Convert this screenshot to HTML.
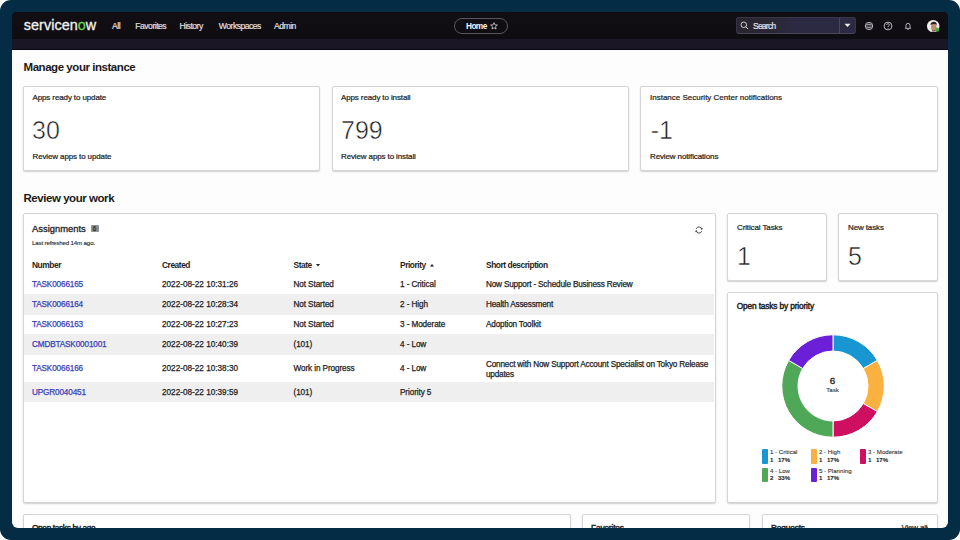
<!DOCTYPE html>
<html><head><meta charset="utf-8">
<style>
*{margin:0;padding:0;box-sizing:border-box;}
html,body{width:960px;height:540px;overflow:hidden;background:#fff;}
body{font-family:"Liberation Sans",sans-serif;color:#1e1e1e;position:relative;}
.frame{position:absolute;left:0;top:0;width:960px;height:540px;background:#042c45;border-radius:11px;}
.screen{position:absolute;left:0;top:0;width:960px;height:540px;clip-path:inset(12px 12px 12px 12px round 4px 4px 6px 6px);}
.bgc{position:absolute;left:0;top:40px;width:960px;height:500px;background:#fefdfd;}
.a{position:absolute;white-space:nowrap;}
.nav{position:absolute;left:0;top:0;width:960px;height:39.4px;background:linear-gradient(#120f15 0,#110e13 60%,#0d0c10 100%);}
.sub{position:absolute;left:0;top:39.4px;width:960px;height:9.4px;background:#1a1626;}
.subl{position:absolute;left:0;top:48.8px;width:960px;height:1px;background:#07050f;}
.navi{color:#e6e4ea;font-size:8.6px;top:21px;line-height:10px;letter-spacing:-0.5px;-webkit-text-stroke:0.15px #e6e4ea;}
.card{position:absolute;background:#fff;border:1px solid #d6d4d4;border-radius:2px;box-shadow:0 1px 1.5px rgba(0,0,0,0.18);}
.h{font-weight:bold;font-size:11.5px;letter-spacing:-0.45px;color:#1a1a1a;}
.t8{font-size:8px;line-height:10px;-webkit-text-stroke:0.22px currentColor;letter-spacing:-0.12px;}
.big{font-size:25px;line-height:28px;color:#1e1e1e;-webkit-text-stroke:0.5px #fff;}
.med{-webkit-text-stroke:0.45px #1e1e1e;letter-spacing:-0.15px;font-size:8.3px;}
.th{font-weight:bold;font-size:8.4px;line-height:10px;letter-spacing:-0.45px;}
.td{font-size:8.2px;line-height:10px;-webkit-text-stroke:0.25px currentColor;letter-spacing:-0.1px;}
.lnk{color:#3940b6;letter-spacing:-0.15px;}
.stripe{position:absolute;left:24px;width:690px;background:#efefef;}
</style></head><body>
<div class="frame"></div>
<div class="screen">
  <div class="bgc"></div>
  <div class="nav"></div>
  <div class="sub"></div>
  <div class="subl"></div>
  <!-- logo -->
  <div class="a" style="left:23.8px;top:16.2px;font-size:14.4px;line-height:18px;color:#f2f2f2;-webkit-text-stroke:0.3px #f2f2f2;letter-spacing:0.05px;">servicen<span style="color:#5fd64b;-webkit-text-stroke:0.3px #5fd64b">o</span>w</div>
  <div class="a navi" style="left:112px;">All</div>
  <div class="a navi" style="left:135.3px;">Favorites</div>
  <div class="a navi" style="left:179.5px;">History</div>
  <div class="a navi" style="left:218.8px;">Workspaces</div>
  <div class="a navi" style="left:274px;">Admin</div>
  <!-- home pill -->
  <div class="a" style="left:454px;top:18px;width:54px;height:16px;border:1px solid #59555e;border-radius:8px;"></div>
  <div class="a" style="left:466px;top:20.9px;font-size:8.3px;line-height:10px;font-weight:bold;color:#f4f4f4;letter-spacing:-0.6px;">Home</div>
  <svg class="a" style="left:490px;top:22px;" width="8" height="8" viewBox="0 0 10 10"><path d="M5 .8 6.2 3.6 9.2 3.8 6.9 5.8 7.6 8.8 5 7.2 2.4 8.8 3.1 5.8.8 3.8 3.8 3.6Z" fill="none" stroke="#e8e6ea" stroke-width="0.9" stroke-linejoin="round"/></svg>
  <!-- search -->
  <div class="a" style="left:736px;top:17px;width:120px;height:17px;background:linear-gradient(90deg,#29262f 0%,#2a2734 30%,#2c2942 45%,#2c2942 100%);border:1px solid #38354a;border-bottom-color:#48455a;border-radius:3px;"></div>
  <div class="a" style="left:839px;top:18px;width:1px;height:15px;background:#49465e;"></div>
  <svg class="a" style="left:740px;top:21px;" width="9" height="9" viewBox="0 0 10 10"><circle cx="4.2" cy="4.2" r="3.1" fill="none" stroke="#dcdae2" stroke-width="1"/><path d="M6.5 6.5 9 9" stroke="#dcdae2" stroke-width="1.1"/></svg>
  <div class="a" style="left:753px;top:21px;font-size:8.4px;line-height:10px;color:#e6e4ea;letter-spacing:-0.7px;-webkit-text-stroke:0.2px #e6e4ea;">Search</div>
  <svg class="a" style="left:844px;top:23px;" width="7" height="5" viewBox="0 0 7 5"><path d="M.5 .8h6L3.5 4Z" fill="#f0f0f0"/></svg>
  <!-- right icons -->
  <svg class="a" style="left:864px;top:21px;" width="10" height="10" viewBox="0 0 10 10"><circle cx="5" cy="5" r="3.7" fill="none" stroke="#c4c1c9" stroke-width="0.9"/><ellipse cx="5" cy="5" rx="3.7" ry="1.5" fill="none" stroke="#c4c1c9" stroke-width="0.8"/><ellipse cx="5" cy="5" rx="1.2" ry="3.7" fill="none" stroke="#a9a6ae" stroke-width="0.6"/></svg>
  <svg class="a" style="left:883px;top:21px;" width="10" height="10" viewBox="0 0 10 10"><circle cx="5" cy="5" r="3.9" fill="none" stroke="#c8c5ce" stroke-width="0.9"/><path d="M3.7 3.9a1.3 1.3 0 1 1 1.8 1.2c-.4.2-.5.5-.5.9" fill="none" stroke="#c8c5ce" stroke-width="0.9"/><circle cx="5" cy="7.2" r=".5" fill="#c8c5ce"/></svg>
  <svg class="a" style="left:903px;top:21px;" width="10" height="10" viewBox="0 0 10 10"><path d="M2.3 7.3h5.4L7 6.2V4.4a2 2 0 0 0-4 0v1.8Z" fill="none" stroke="#c8c5ce" stroke-width="0.9" stroke-linejoin="round"/><path d="M4.3 8.3h1.4" stroke="#c8c5ce" stroke-width="0.9"/></svg>
  <svg class="a" style="left:927.2px;top:19.7px;" width="12.4" height="12.4" viewBox="0 0 12 12"><defs><clipPath id="av"><circle cx="6" cy="6" r="5.4"/></clipPath></defs><circle cx="6" cy="6" r="6" fill="#f2eeec"/><g clip-path="url(#av)"><ellipse cx="6.6" cy="7" rx="2.7" ry="3.5" fill="#bf8d73"/><path d="M3.4 5.2C3.4 2.6 5 1.8 6.6 1.8S9.8 2.8 9.6 5.4L9 4.4C8 3.6 5.5 3.6 4 4.6Z" fill="#2c211d"/><path d="M4 11.5 5 10h3.4l1 1.5Z" fill="#6e4f43"/></g><rect x="8.4" y="7.6" width="3" height="3.6" fill="#3cb43a"/></svg>


  <!-- Manage your instance -->
  <div class="a h" style="left:23.5px;top:59px;line-height:16px;">Manage your instance</div>
  <div class="card" style="left:23px;top:86px;width:297px;height:85px;"></div>
  <div class="card" style="left:332px;top:86px;width:297px;height:85px;"></div>
  <div class="card" style="left:640px;top:86px;width:298px;height:85px;"></div>
  <div class="a t8" style="left:32.5px;top:93px;">Apps ready to update</div>
  <div class="a big" style="left:32px;top:116px;">30</div>
  <div class="a t8" style="left:32.5px;top:152px;">Review apps to update</div>
  <div class="a t8" style="left:341px;top:93px;">Apps ready to install</div>
  <div class="a big" style="left:341px;top:116px;">799</div>
  <div class="a t8" style="left:341px;top:152px;">Review apps to install</div>
  <div class="a t8" style="left:650px;top:93px;letter-spacing:0;">Instance Security Center notifications</div>
  <div class="a big" style="left:650.7px;top:116px;">-1</div>
  <div class="a t8" style="left:650px;top:152px;">Review notifications</div>

  <!-- Review your work -->
  <div class="a h" style="left:23.5px;top:190.4px;line-height:16px;">Review your work</div>
  <div class="card" style="left:23px;top:213px;width:693px;height:289.5px;"></div>
  <div class="a" style="left:32px;top:222.6px;font-size:9.4px;line-height:12px;-webkit-text-stroke:0.3px #1e1e1e;">Assignments</div>
  <div class="a" style="left:90.5px;top:224.8px;width:8px;height:7.5px;background:#918f8f;border-radius:1px;color:#1a1a1a;font-size:6.4px;line-height:7.6px;text-align:center;-webkit-text-stroke:0.15px #1a1a1a;">6</div>
  <div class="a" style="left:32px;top:238.8px;font-size:6.2px;line-height:8px;letter-spacing:-0.18px;-webkit-text-stroke:0.1px #1e1e1e;">Last refreshed 14m ago.</div>
  <svg class="a" style="left:695px;top:226px;" width="8" height="8" viewBox="0 0 8 8"><path d="M6.99 3.20A3.1 3.1 0 0 0 1.09 2.94M1.01 4.80A3.1 3.1 0 0 0 6.91 5.06" fill="none" stroke="#2a2a2a" stroke-width="0.8"/><path d="M5.69 3.00L6.99 3.30L7.39 1.90M2.31 5.00L1.01 4.70L0.61 6.10" fill="none" stroke="#2a2a2a" stroke-width="0.7"/></svg>

  <div class="stripe" style="top:294px;height:20.5px;"></div>
  <div class="stripe" style="top:334.3px;height:20.7px;"></div>
  <div class="stripe" style="top:381.5px;height:20px;"></div>

  <div class="a th" style="left:32px;top:260px;">Number</div>
  <div class="a th" style="left:162px;top:260px;">Created</div>
  <div class="a th" style="left:293.5px;top:260px;">State<svg style="position:absolute;left:22px;top:3.8px" width="4" height="3" viewBox="0 0 4 3"><path d="M0 0h4L2 2.6Z" fill="#1e1e1e"/></svg></div>
  <div class="a th" style="left:400px;top:260px;">Priority<svg style="position:absolute;left:30px;top:3.6px" width="4" height="3" viewBox="0 0 4 3"><path d="M0 2.6h4L2 0Z" fill="#1e1e1e"/></svg></div>
  <div class="a th" style="left:486px;top:260px;">Short description</div>

  <div class="a td lnk" style="left:32px;top:279.9px;">TASK0066165</div>
  <div class="a td" style="letter-spacing:0;left:162px;top:279.9px;">2022-08-22 10:31:26</div>
  <div class="a td" style="left:293.5px;top:279.9px;">Not Started</div>
  <div class="a td" style="left:400px;top:279.9px;">1 - Critical</div>
  <div class="a td" style="letter-spacing:-0.18px;left:486px;top:279.9px;">Now Support - Schedule Business Review</div>

  <div class="a td lnk" style="left:32px;top:299.9px;">TASK0066164</div>
  <div class="a td" style="letter-spacing:0;left:162px;top:299.9px;">2022-08-22 10:28:34</div>
  <div class="a td" style="left:293.5px;top:299.9px;">Not Started</div>
  <div class="a td" style="left:400px;top:299.9px;">2 - High</div>
  <div class="a td" style="letter-spacing:-0.18px;left:486px;top:299.9px;">Health Assessment</div>

  <div class="a td lnk" style="left:32px;top:319.9px;">TASK0066163</div>
  <div class="a td" style="letter-spacing:0;left:162px;top:319.9px;">2022-08-22 10:27:23</div>
  <div class="a td" style="left:293.5px;top:319.9px;">Not Started</div>
  <div class="a td" style="left:400px;top:319.9px;">3 - Moderate</div>
  <div class="a td" style="letter-spacing:-0.18px;left:486px;top:319.9px;">Adoption Toolkit</div>

  <div class="a td lnk" style="left:32px;top:339.9px;">CMDBTASK0001001</div>
  <div class="a td" style="letter-spacing:0;left:162px;top:339.9px;">2022-08-22 10:40:39</div>
  <div class="a td" style="left:293.5px;top:339.9px;">(101)</div>
  <div class="a td" style="left:400px;top:339.9px;">4 - Low</div>

  <div class="a td lnk" style="left:32px;top:364.3px;">TASK0066166</div>
  <div class="a td" style="letter-spacing:0;left:162px;top:364.3px;">2022-08-22 10:38:30</div>
  <div class="a td" style="left:293.5px;top:364.3px;">Work in Progress</div>
  <div class="a td" style="left:400px;top:364.3px;">4 - Low</div>
  <div class="a td" style="letter-spacing:-0.18px;left:486px;top:359.5px;">Connect with Now Support Account Specialist on Tokyo Release</div>
  <div class="a td" style="letter-spacing:-0.18px;left:486px;top:369.6px;">updates</div>

  <div class="a td lnk" style="left:32px;top:387.9px;">UPGR0040451</div>
  <div class="a td" style="letter-spacing:0;left:162px;top:387.9px;">2022-08-22 10:39:59</div>
  <div class="a td" style="left:293.5px;top:387.9px;">(101)</div>
  <div class="a td" style="left:400px;top:387.9px;">Priority 5</div>

  <!-- right column -->
  <div class="card" style="left:727px;top:213px;width:100px;height:67.5px;"></div>
  <div class="card" style="left:838px;top:213px;width:100px;height:67.5px;"></div>
  <div class="a t8" style="left:737px;top:222.5px;">Critical Tasks</div>
  <div class="a big" style="left:737px;top:242px;">1</div>
  <div class="a t8" style="left:848px;top:222.5px;">New tasks</div>
  <div class="a big" style="left:848px;top:242px;">5</div>

  <div class="card" style="left:727px;top:292px;width:211px;height:211px;"></div>
  <div class="a t8 med" style="left:736.8px;top:300.5px;font-size:8.3px;letter-spacing:-0.14px;">Open tasks by priority</div>

  <svg class="a" style="left:779.5px;top:332.7px;" width="106" height="106" viewBox="-53 -53 106 106" id="donut"><path d="M0.00 -51.20A51.2 51.2 0 0 1 44.34 -25.60L30.31 -17.50A35 35 0 0 0 0.00 -35.00Z" fill="#1896d2" stroke="#fff" stroke-width="1"/><path d="M44.34 -25.60A51.2 51.2 0 0 1 44.34 25.60L30.31 17.50A35 35 0 0 0 30.31 -17.50Z" fill="#fbb13f" stroke="#fff" stroke-width="1"/><path d="M44.34 25.60A51.2 51.2 0 0 1 0.00 51.20L0.00 35.00A35 35 0 0 0 30.31 17.50Z" fill="#cf0f5f" stroke="#fff" stroke-width="1"/><path d="M0.00 51.20A51.2 51.2 0 0 1 -44.34 -25.60L-30.31 -17.50A35 35 0 0 0 0.00 35.00Z" fill="#4fa758" stroke="#fff" stroke-width="1"/><path d="M-44.34 -25.60A51.2 51.2 0 0 1 -0.00 -51.20L-0.00 -35.00A35 35 0 0 0 -30.31 -17.50Z" fill="#6b1fd6" stroke="#fff" stroke-width="1"/></svg>
  <div class="a" style="left:812.5px;top:375px;width:40px;text-align:center;font-size:9.8px;line-height:11px;-webkit-text-stroke:0.35px #1e1e1e;">6</div>
  <div class="a" style="left:812.5px;top:385.6px;width:40px;text-align:center;font-size:6.2px;line-height:7px;color:#333;-webkit-text-stroke:0.1px #333;">Task</div>

  <!-- legend -->
  <div class="a" style="left:762px;top:449px;width:5.5px;height:14.5px;border-radius:1px;background:#1896d2;"></div>
  <div class="a" style="left:770px;top:448.4px;font-size:6.1px;line-height:7.4px;color:#333;-webkit-text-stroke:0.1px #333;">1 - Critical<br><b style="color:#1e1e1e">1<span style="margin-left:4.6px">17%</span></b></div>
  <div class="a" style="left:811px;top:449px;width:5.5px;height:14.5px;border-radius:1px;background:#fbb13f;"></div>
  <div class="a" style="left:819px;top:448.4px;font-size:6.1px;line-height:7.4px;color:#333;-webkit-text-stroke:0.1px #333;">2 - High<br><b style="color:#1e1e1e">1<span style="margin-left:4.6px">17%</span></b></div>
  <div class="a" style="left:860px;top:449px;width:5.5px;height:14.5px;border-radius:1px;background:#cf0f5f;"></div>
  <div class="a" style="left:868px;top:448.4px;font-size:6.1px;line-height:7.4px;color:#333;-webkit-text-stroke:0.1px #333;">3 - Moderate<br><b style="color:#1e1e1e">1<span style="margin-left:4.6px">17%</span></b></div>
  <div class="a" style="left:762px;top:467.5px;width:5.5px;height:14.5px;border-radius:1px;background:#4fa758;"></div>
  <div class="a" style="left:770px;top:466.8px;font-size:6.1px;line-height:7.4px;color:#333;-webkit-text-stroke:0.1px #333;">4 - Low<br><b style="color:#1e1e1e">2<span style="margin-left:4.6px">33%</span></b></div>
  <div class="a" style="left:811px;top:467.5px;width:5.5px;height:14.5px;border-radius:1px;background:#6b1fd6;"></div>
  <div class="a" style="left:819px;top:466.8px;font-size:6.1px;line-height:7.4px;color:#333;-webkit-text-stroke:0.1px #333;">5 - Planning<br><b style="color:#1e1e1e">1<span style="margin-left:4.6px">17%</span></b></div>

  <!-- bottom row -->
  <div class="card" style="left:23px;top:514px;width:547.5px;height:40px;"></div>
  <div class="card" style="left:581.5px;top:514px;width:168.5px;height:40px;"></div>
  <div class="card" style="left:762px;top:514px;width:176px;height:40px;"></div>
  <div class="a t8 med" style="left:32px;top:523px;letter-spacing:-0.35px;">Open tasks by age</div>
  <div class="a t8 med" style="left:591px;top:523px;">Favorites</div>
  <div class="a t8 med" style="left:771px;top:523px;">Requests</div>
  <div class="a t8" style="left:901.5px;top:523px;letter-spacing:-0.2px;">View all</div>
  <svg class="a" style="left:925px;top:524.5px;" width="4" height="6" viewBox="0 0 4 6"><path d="M1 1 3 3 1 5" fill="none" stroke="#333" stroke-width="0.8"/></svg>
</div>
</body></html>
